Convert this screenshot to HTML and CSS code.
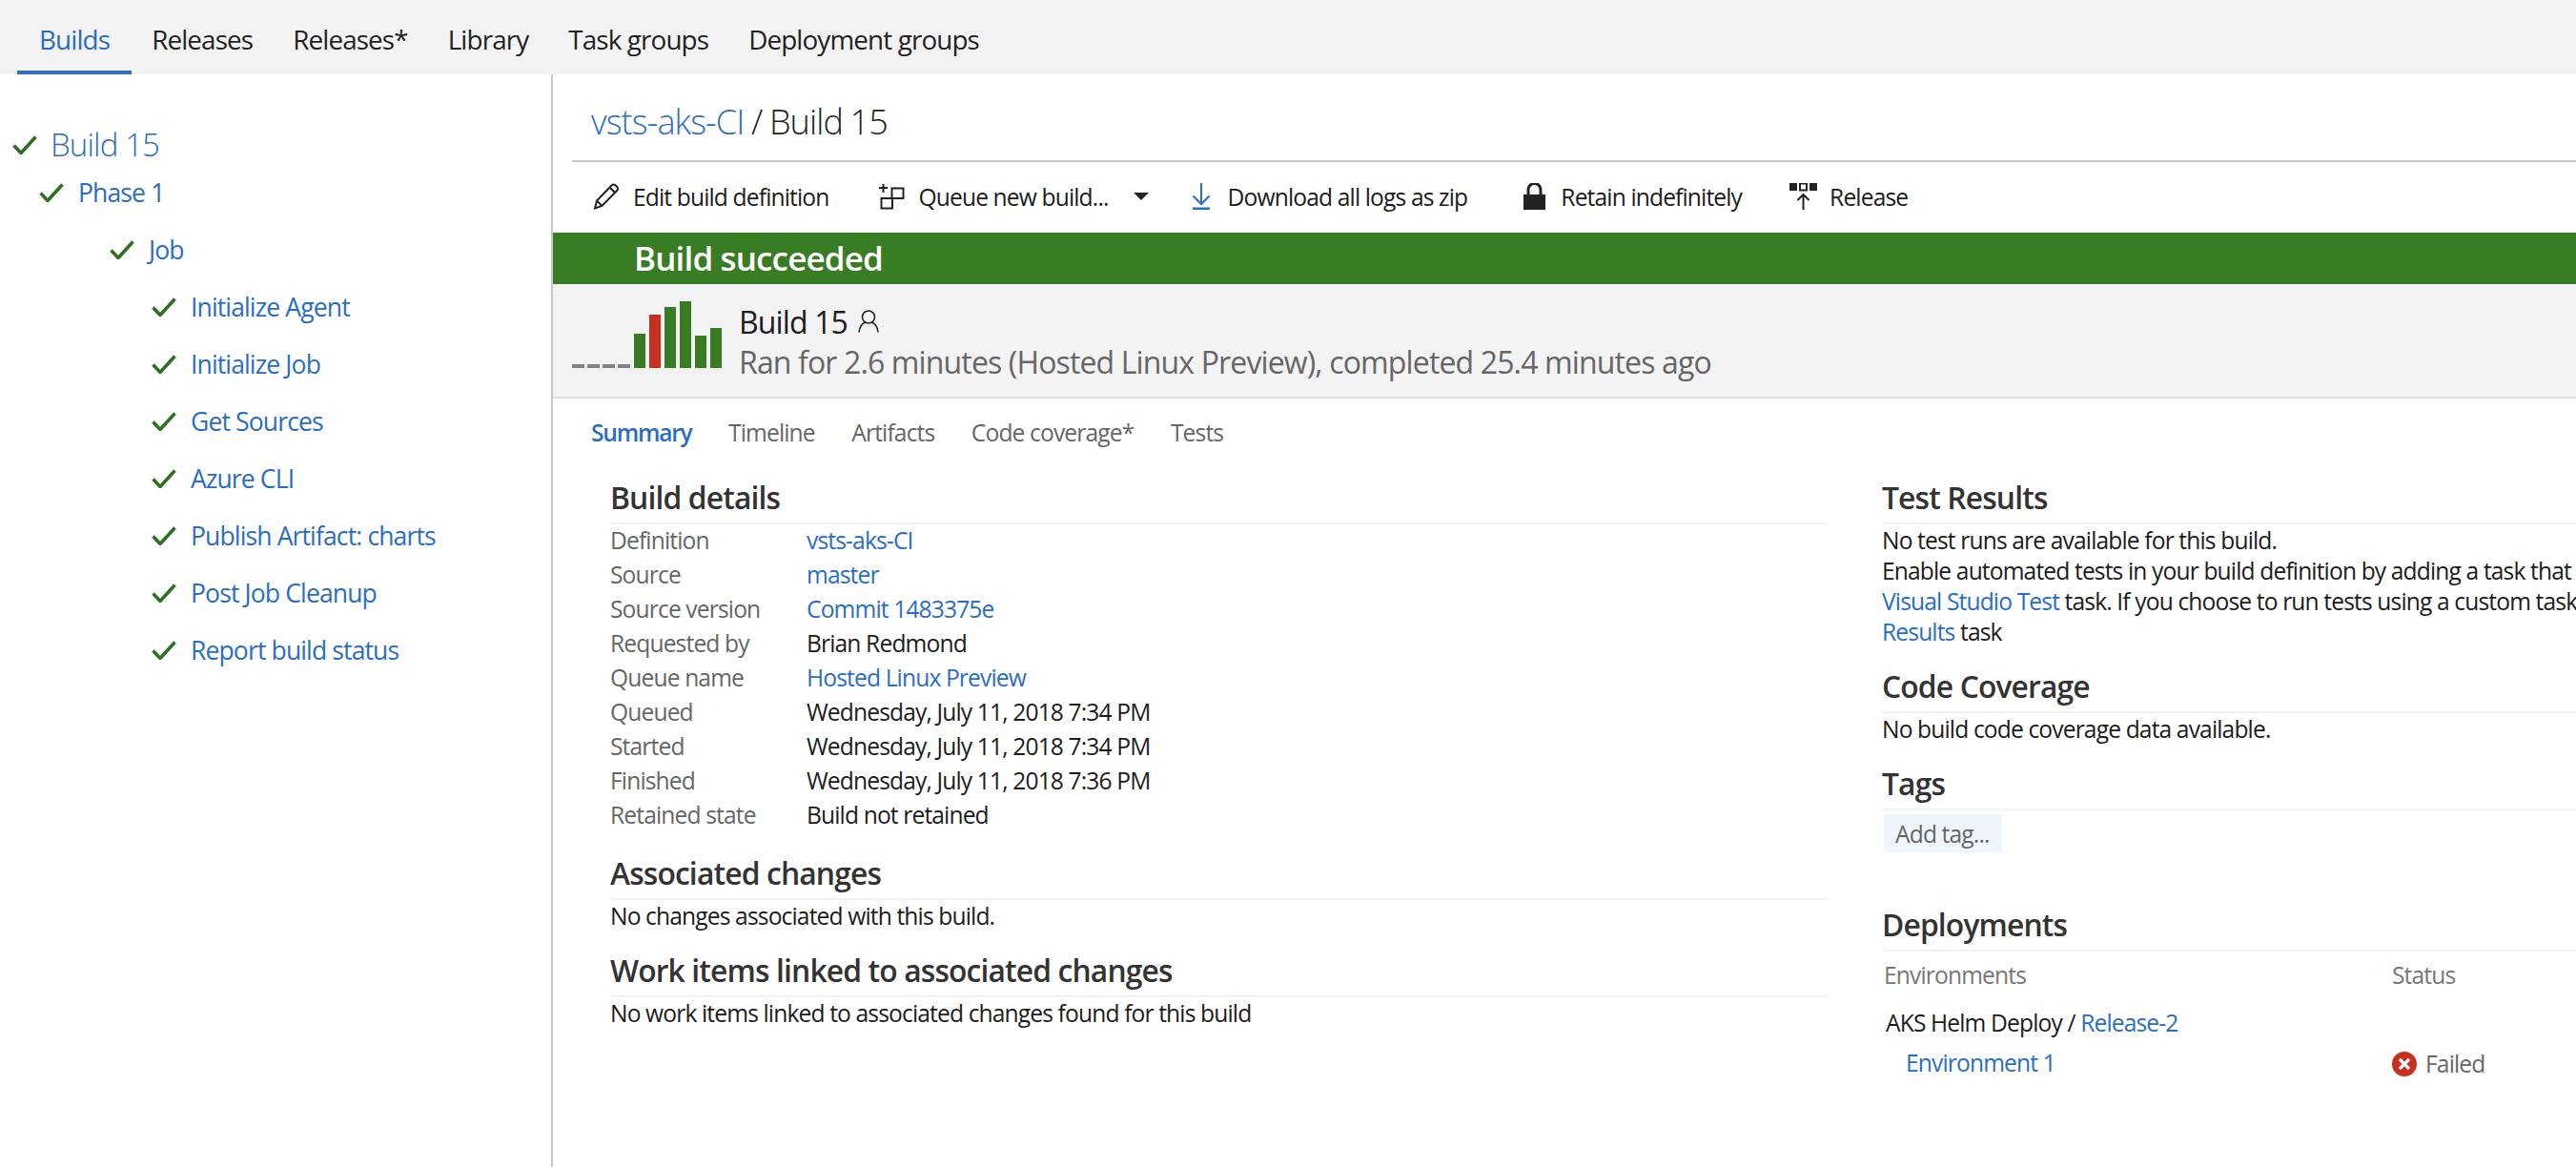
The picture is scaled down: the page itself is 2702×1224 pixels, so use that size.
FILE: index.html
```html
<!DOCTYPE html>
<html lang="en">
<head>
<meta charset="utf-8">
<title>Build 15</title>
<link rel="stylesheet" href="styles.css">
</head>
<body>
<nav class="topnav">
  <a class="nav-item active">Builds</a>
  <a class="nav-item">Releases</a>
  <a class="nav-item">Releases*</a>
  <a class="nav-item">Library</a>
  <a class="nav-item">Task groups</a>
  <a class="nav-item">Deployment groups</a>
</nav>
<div class="page">
  <aside class="sidebar">
    <div class="tree-row lvl0 big"><svg class="check" viewBox="0 0 26 20"><path d="M1.5 10.5 9 18.5 24.5 1.5"/></svg><a>Build 15</a></div>
    <div class="tree-row lvl1"><svg class="check" viewBox="0 0 26 20"><path d="M1.5 10.5 9 18.5 24.5 1.5"/></svg><a>Phase 1</a></div>
    <div class="tree-row lvl2"><svg class="check" viewBox="0 0 26 20"><path d="M1.5 10.5 9 18.5 24.5 1.5"/></svg><a>Job</a></div>
    <div class="tree-row lvl3"><svg class="check" viewBox="0 0 26 20"><path d="M1.5 10.5 9 18.5 24.5 1.5"/></svg><a>Initialize Agent</a></div>
    <div class="tree-row lvl3"><svg class="check" viewBox="0 0 26 20"><path d="M1.5 10.5 9 18.5 24.5 1.5"/></svg><a>Initialize Job</a></div>
    <div class="tree-row lvl3"><svg class="check" viewBox="0 0 26 20"><path d="M1.5 10.5 9 18.5 24.5 1.5"/></svg><a>Get Sources</a></div>
    <div class="tree-row lvl3"><svg class="check" viewBox="0 0 26 20"><path d="M1.5 10.5 9 18.5 24.5 1.5"/></svg><a>Azure CLI</a></div>
    <div class="tree-row lvl3"><svg class="check" viewBox="0 0 26 20"><path d="M1.5 10.5 9 18.5 24.5 1.5"/></svg><a>Publish Artifact: charts</a></div>
    <div class="tree-row lvl3"><svg class="check" viewBox="0 0 26 20"><path d="M1.5 10.5 9 18.5 24.5 1.5"/></svg><a>Post Job Cleanup</a></div>
    <div class="tree-row lvl3"><svg class="check" viewBox="0 0 26 20"><path d="M1.5 10.5 9 18.5 24.5 1.5"/></svg><a>Report build status</a></div>
  </aside>
  <main class="main">
    <header class="title-row">
      <h1 class="title"><a>vsts-aks-CI</a> / Build 15</h1>
    </header>
    <div class="toolbar">
      <div class="tool tool-edit">
        <svg class="tool-icon" width="28" height="28" viewBox="0 0 28 28"><path class="ln" d="M2 26.500 4 18.500 19.500 2.500a3 3 0 0 1 4.200 0l1.300 1.300a3 3 0 0 1 0 4.200L9.500 24 2 26.500ZM4 18.500l5.500 5.500M17.500 4.500l6 6"/></svg>
        <span>Edit build definition</span>
      </div>
      <div class="tool tool-queue">
        <svg class="tool-icon" width="28" height="28" viewBox="0 0 28 28"><path class="ln" d="M0 5h9M4.500 1v9M13.500 5.500h12V16h-12zM2.500 16H14v10.500H2.500z"/></svg>
        <span>Queue new build...</span>
        <svg class="caret" width="16" height="8" viewBox="0 0 16 8"><path d="M0 0h16L8 8z"/></svg>
      </div>
      <div class="tool tool-download">
        <svg class="tool-icon" width="20" height="28" viewBox="0 0 20 28"><path class="ln blue" d="M10 0v22M1.500 13.500 10 22l8.500-8.500"/><path class="ln blue thick" d="M1 27h18"/></svg>
        <span>Download all logs as zip</span>
      </div>
      <div class="tool tool-lock">
        <svg class="tool-icon" width="23" height="28" viewBox="0 0 23 28"><path class="solid" d="M0 12h23v16H0z"/><path class="ln thick" d="M5 12V7a6.500 6.500 0 0 1 13 0v5"/></svg>
        <span>Retain indefinitely</span>
      </div>
      <div class="tool tool-release">
        <svg class="tool-icon" width="29" height="28" viewBox="0 0 29 28"><path class="solid" d="M0 0h8v8H0zM21 0h8v8h-8z"/><path class="ln" d="M11 .5h7v7h-7z"/><path class="ln" d="M14.500 28V12M8.500 18l6-6 6 6"/></svg>
        <span>Release</span>
      </div>
    </div>
    <div class="banner">Build succeeded</div>
    <section class="summary">
      <div class="history">
        <i class="dash"></i><i class="dash"></i><i class="dash"></i><i class="dash"></i>
        <i class="bar bar-a"></i><i class="bar bar-b fail"></i><i class="bar bar-c"></i><i class="bar bar-d"></i><i class="bar bar-e"></i><i class="bar bar-f"></i>
      </div>
      <div class="summary-text">
        <div class="summary-name">Build 15
          <svg class="person" width="22" height="24" viewBox="0 0 22 24"><circle cx="11" cy="7.500" r="6.500"/><path d="M1 23.500C1.500 17.500 5 14 8 13M21 23.500C20.500 17.500 17 14 14 13"/></svg>
        </div>
        <div class="summary-sub">Ran for 2.6 minutes (Hosted Linux Preview), completed 25.4 minutes ago</div>
      </div>
    </section>
    <div class="tabs">
      <a class="tab current">Summary</a>
      <a class="tab">Timeline</a>
      <a class="tab">Artifacts</a>
      <a class="tab">Code coverage*</a>
      <a class="tab">Tests</a>
    </div>
    <div class="columns">
      <div class="col-left">
        <h2 class="heading first">Build details</h2>
        <dl class="details">
          <div class="detail"><dt>Definition</dt><dd><a>vsts-aks-CI</a></dd></div>
          <div class="detail"><dt>Source</dt><dd><a>master</a></dd></div>
          <div class="detail"><dt>Source version</dt><dd><a>Commit 1483375e</a></dd></div>
          <div class="detail"><dt>Requested by</dt><dd>Brian Redmond</dd></div>
          <div class="detail"><dt>Queue name</dt><dd><a>Hosted Linux Preview</a></dd></div>
          <div class="detail"><dt>Queued</dt><dd>Wednesday, July 11, 2018 7:34 PM</dd></div>
          <div class="detail"><dt>Started</dt><dd>Wednesday, July 11, 2018 7:34 PM</dd></div>
          <div class="detail"><dt>Finished</dt><dd>Wednesday, July 11, 2018 7:36 PM</dd></div>
          <div class="detail"><dt>Retained state</dt><dd>Build not retained</dd></div>
        </dl>
        <h2 class="heading assoc">Associated changes</h2>
        <p class="line">No changes associated with this build.</p>
        <h2 class="heading work">Work items linked to associated changes</h2>
        <p class="line">No work items linked to associated changes found for this build</p>
      </div>
      <div class="col-right">
        <h2 class="heading first">Test Results</h2>
        <p class="para">No test runs are available for this build.<br>Enable automated tests in your build definition by adding a task that<br><a>Visual Studio Test</a> task. If you choose to run tests using a custom task<br><a>Results</a> task</p>
        <h2 class="heading sect">Code Coverage</h2>
        <p class="para">No build code coverage data available.</p>
        <h2 class="heading sect">Tags</h2>
        <div class="tag-add">Add tag...</div>
        <h2 class="heading deploy">Deployments</h2>
        <div class="deploy-grid">
          <div class="deploy-head">Environments</div><div class="deploy-head">Status</div>
          <div class="deploy-rel">AKS Helm Deploy / <a>Release-2</a></div><div class="deploy-rel"></div>
          <div class="deploy-env"><a>Environment 1</a></div>
          <div class="deploy-status">
            <svg width="26" height="26" viewBox="0 0 26 26"><circle class="fail-bg" cx="13" cy="13" r="13"/><path class="fail-x" d="M8 8l10 10M18 8 8 18"/></svg>
            <span>Failed</span>
          </div>
        </div>
      </div>
    </div>
  </main>
</div>
</body>
</html>
```

FILE: styles.css
```css
* { box-sizing: border-box; }
html, body { margin: 0; height: 100%; overflow: hidden; }
body {
  width: 2702px;
  height: 1224px;
  background: #fff;
  color: #1c1c1c;
  font-family: "Open Sans", "Noto Sans", sans-serif;
  font-size: 24.6px;
  letter-spacing: -0.035em;
}
a { color: #2a6dc4; text-decoration: none; }

.topnav {
  display: flex;
  height: 78px;
  padding-left: 18px;
  background: #f3f3f3;
}
.nav-item {
  display: flex;
  align-items: center;
  height: 78px;
  padding: 8px 21px 0;
  font-size: 27.8px;
  color: #222;
  border-bottom: 4px solid transparent;
}
.nav-item.active { color: #2a6dc4; border-bottom-color: #2f6fbd; padding: 8px 23px 0; }

.page { display: flex; height: 1146px; }

.sidebar {
  width: 580px;
  flex: none;
  padding-top: 51px;
  border-right: 2px solid #c8c8c8;
}
.tree-row {
  display: flex;
  align-items: center;
  height: 60px;
  font-size: 26.5px;
}
.tree-row.big { height: 43px; padding-top: 2px; font-size: 33px; font-weight: 300; }
.tree-row.lvl0 { padding-left: 13px; gap: 14px; }
.tree-row.lvl1 { padding-left: 41px; gap: 15px; }
.tree-row.lvl2 { padding-left: 115px; gap: 15px; }
.tree-row.lvl3 { padding-left: 159px; gap: 15px; }
.check { width: 26px; height: 20px; flex: none; }
.check path { fill: none; stroke: #2f7022; stroke-width: 3.6; }

.main { flex: 1; min-width: 0; overflow: hidden; }

.title-row {
  height: 92px;
  margin-left: 20px;
  padding: 10px 0 2px 20px;
  display: flex;
  align-items: center;
  border-bottom: 2px solid #c8c8c8;
}
.title { margin: 0; font-size: 36px; font-weight: 300; color: #222; word-spacing: -1px; }

.toolbar {
  display: flex;
  align-items: center;
  height: 74px;
  padding: 0 0 2px 42px;
  font-size: 24.6px;
}
.tool { display: flex; align-items: center; flex: none; }
.tool-icon { flex: none; }
.tool-edit { margin-right: 53px; }
.tool-edit .tool-icon { margin-right: 14px; }
.tool-queue { margin-right: 45px; }
.tool-queue .tool-icon { margin-right: 13px; }
.tool-download { margin-right: 59px; }
.tool-download .tool-icon { margin-right: 18px; }
.tool-lock { margin-right: 50px; }
.tool-lock .tool-icon { margin-right: 16px; }
.tool-release .tool-icon { margin-right: 13px; }
.caret { margin-left: 26px; }
.caret path { fill: #222; }
.ln { fill: none; stroke: #222; stroke-width: 2; }
.ln.blue { stroke: #2a6dc4; }
.ln.thick { stroke-width: 3; }
.solid { fill: #222; }

.banner {
  height: 54px;
  padding: 0 0 2px 85px;
  display: flex;
  align-items: center;
  background: #387c23;
  color: #fff;
  font-size: 35px;
  font-weight: 600;
}

.summary {
  display: flex;
  height: 120px;
  padding-left: 20px;
  background: #f3f3f3;
  border-bottom: 2px solid #dcdcdc;
}
.history {
  display: flex;
  align-items: flex-end;
  gap: 3px;
  width: 175px;
  height: 88px;
  flex: none;
}
.dash { width: 13px; height: 4px; background: #7a828a; }
.bar { width: 12px; background: #387c23; margin-right: 1px; }
.dash + .bar { margin-left: 1px; }
.bar-a { height: 36px; }
.bar-b { height: 56px; }
.bar-c { height: 64px; }
.bar-d { height: 70px; }
.bar-e { height: 34px; }
.bar-f { height: 42px; }
.bar.fail { background: #c92f1e; }
.summary-name { display: flex; align-items: center; gap: 11px; height: 40px; margin-top: 19px; font-size: 32px; }
.summary-sub { height: 44px; margin-top: 1px; line-height: 44px; font-size: 32px; color: #666; white-space: nowrap; }
.person { fill: none; stroke: #222; stroke-width: 1.6; }

.tabs {
  display: flex;
  align-items: center;
  height: 70px;
  padding-left: 40px;
  gap: 38.5px;
}
.tab { color: #666; }
.tab.current { color: #2a6dc4; font-weight: 600; letter-spacing: -0.05em; }

.columns {
  display: grid;
  grid-template-columns: 1279px 1fr;
  column-gap: 55px;
  padding-left: 60px;
}
.col-left, .col-right { min-width: 0; overflow: hidden; }
.heading {
  display: flex;
  align-items: center;
  height: 52px;
  margin: 0;
  padding-bottom: 3px;
  border-bottom: 2px solid #f2f2f2;
  font-size: 31.8px;
  font-weight: 600;
  color: #333;
}
.heading.first { margin-top: 10px; }
.heading.assoc { margin-top: 18px; }
.heading.work { margin-top: 14px; }
.heading.sect { margin-top: 17px; }
.heading.deploy { margin-top: 52px; }

.details { margin: 0; }
.detail { display: flex; align-items: center; height: 36px; padding-bottom: 4px; }
.detail dt { width: 206px; color: #666; }
.detail dd { margin: 0; }
.line { margin: 0; height: 36px; line-height: 33px; }

.para { margin: 1px 0 1px; line-height: 32px; white-space: nowrap; }
.tag-add {
  width: 124px;
  height: 40px;
  margin: 4px 0 0 2px;
  padding-left: 12px;
  line-height: 41px;
  background: #eff5fb;
  color: #666;
}

.deploy-grid {
  display: grid;
  grid-template-columns: 535px 1fr;
}
.deploy-head { height: 49px; line-height: 50px; padding-left: 2px; color: #777; }
.deploy-head + .deploy-head { padding-left: 0; }
.deploy-rel { height: 52px; line-height: 52px; padding-left: 4px; }
.deploy-env { height: 33px; line-height: 32px; padding-left: 25px; }
.deploy-status { display: flex; align-items: center; gap: 9px; height: 33px; color: #666; }
.fail-bg { fill: #c92f1e; }
.fail-x { fill: none; stroke: #fff; stroke-width: 3.2; }
```
